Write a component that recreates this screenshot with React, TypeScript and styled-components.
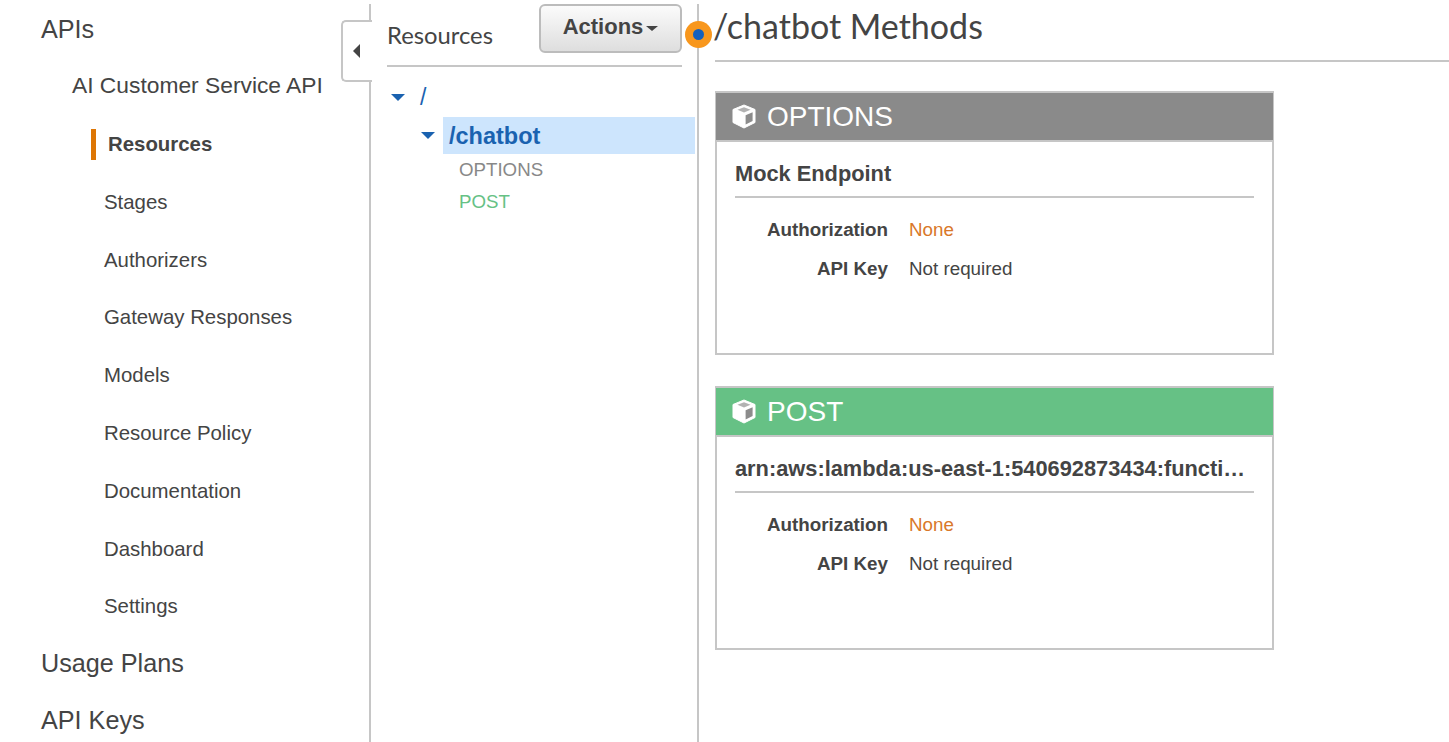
import React from 'react';
import styled, { createGlobalStyle } from 'styled-components';

interface INavItemProps {
  active?: boolean;
}
interface IMethodProps {
  method: 'options' | 'post';
}

const methodColors = {
  options: '#8a8a8a',
  post: '#66c185',
};

const GlobalStyle = createGlobalStyle`
  html, body {
    margin: 0;
    padding: 0;
    height: 742px;
    overflow: hidden;
    background: #fff;
  }
  * {
    box-sizing: border-box;
  }
`;

const Page = styled.div`
  position: relative;
  display: flex;
  height: 742px;
  width: 1449px;
  overflow: hidden;
  font-family: 'Liberation Sans', Arial, sans-serif;
  color: #444;
`;

const SideNav = styled.nav`
  width: 371px;
  flex: none;
  margin-top: 4px;
  border-right: 2px solid #c6c6c6;
  padding-top: 8px;
`;

const TopLink = styled.div`
  height: 35px;
  line-height: 35px;
  padding-left: 41px;
  font-size: 25.2px;
  color: #444;
`;

const ApiName = styled.div`
  height: 35px;
  line-height: 34px;
  margin-top: 21px;
  padding-left: 72px;
  font-size: 22.8px;
  color: #444;
`;

const SubNav = styled.div`
  margin-top: 12.6px;
  padding-left: 91px;
`;

const SubItem = styled.div<INavItemProps>`
  height: 57.8px;
  display: flex;
  align-items: center;
  font-size: 20.4px;
  font-weight: ${props => (props.active ? 700 : 400)};
  color: #444;
  padding-left: ${props => (props.active ? 17 : 13)}px;
  position: relative;
  ${props =>
    props.active
      ? `&::before {
          content: '';
          position: absolute;
          left: 0;
          top: 13px;
          width: 5px;
          height: 31px;
          background: #dd7605;
        }`
      : ''}
`;

const BottomLinks = styled.div`
  margin-top: 10.4px;
  display: flex;
  flex-direction: column;
  gap: 22px;
`;

const CollapseTab = styled.div`
  position: absolute;
  left: 341px;
  top: 20px;
  width: 31px;
  height: 62px;
  background: #fff;
  border: 2px solid #c6c6c6;
  border-right: none;
  border-radius: 5px 0 0 5px;
  display: flex;
  align-items: center;
  padding-left: 10px;
`;

const CollapseArrow = styled.span`
  width: 0;
  height: 0;
  border-top: 7px solid transparent;
  border-bottom: 7px solid transparent;
  border-right: 7px solid #444;
`;

const ResourcePanel = styled.section`
  width: 328px;
  flex: none;
  margin-top: 4px;
  border-right: 2px solid #c6c6c6;
  padding-left: 16px;
`;

const ResourceHeader = styled.div`
  width: 295px;
  height: 63px;
  border-bottom: 2px solid #c6c6c6;
  display: flex;
  justify-content: space-between;
  align-items: flex-start;
`;

const ResourceTitle = styled.h2`
  margin: 16px 0 0;
  font-family: Lato, sans-serif;
  font-weight: 400;
  font-size: 23.8px;
  line-height: 30px;
  color: #444;
`;

const ActionsButton = styled.button`
  width: 143px;
  height: 49px;
  border: 2px solid #bcbcbc;
  border-radius: 6px;
  background: linear-gradient(#fbfbfb, #dedede);
  font-family: 'Liberation Sans', Arial, sans-serif;
  font-weight: 700;
  font-size: 22px;
  color: #444;
  display: flex;
  align-items: center;
  justify-content: center;
  gap: 3px;
  padding: 0 0 3px;
`;

const ActionsCaret = styled.span`
  width: 0;
  height: 0;
  margin-top: 3px;
  border-left: 6px solid transparent;
  border-right: 6px solid transparent;
  border-top: 5px solid #444;
`;

const Tree = styled.div`
  padding-top: 12px;
`;

const RootRow = styled.div`
  height: 37px;
  display: flex;
  align-items: center;
  gap: 15px;
  padding-left: 4px;
  color: #1a62b0;
  font-size: 23px;
`;

const TreeCaret = styled.span`
  width: 0;
  height: 0;
  border-left: 7px solid transparent;
  border-right: 7px solid transparent;
  border-top: 7px solid #1a62b0;
`;

const ChildRow = styled.div`
  height: 37px;
  margin-top: 1px;
  display: flex;
  align-items: center;
  gap: 8px;
  padding-left: 34px;
`;

const SelectedResource = styled.div`
  width: 252px;
  height: 37px;
  line-height: 38px;
  background: #cde5fd;
  color: #1a62b0;
  font-weight: 700;
  font-size: 23.5px;
  padding-left: 6px;
`;

const MethodLink = styled.div<IMethodProps>`
  margin-left: 72px;
  height: 32px;
  line-height: 32px;
  font-size: 18.7px;
  color: ${props => (props.method === 'post' ? methodColors.post : '#888')};
`;

const Main = styled.main`
  flex: 1;
  padding-left: 16px;
  margin-top: -1px;
`;

const MainTitle = styled.h1`
  margin: 0;
  height: 63px;
  border-bottom: 2px solid #c6c6c6;
  font-family: Lato, sans-serif;
  font-weight: 400;
  font-size: 34px;
  line-height: 54px;
  text-indent: -2px;
  color: #444;
`;

const Cards = styled.div`
  padding-top: 29px;
  display: flex;
  flex-direction: column;
  gap: 31px;
`;

const Card = styled.article`
  width: 559px;
  height: 264px;
  border: 2px solid #c6c6c6;
`;

const CardHeader = styled.header<IMethodProps>`
  margin: -2px -1px 0 -1px;
  height: 51px;
  border-top: 2px solid #c6c6c6;
  border-bottom: 2px solid #c6c6c6;
  background: ${props => methodColors[props.method]};
  color: #fff;
  font-size: 28px;
  display: flex;
  align-items: center;
  gap: 11px;
  padding-left: 16px;
`;

const CardBody = styled.div`
  padding: 12px 18px 0 18px;
`;

const Integration = styled.div`
  height: 44px;
  line-height: 40px;
  border-bottom: 2px solid #c6c6c6;
  font-weight: 700;
  font-size: 21.8px;
  color: #444;
  white-space: nowrap;
  overflow: hidden;
  text-overflow: ellipsis;
`;

const InfoList = styled.dl`
  margin: 12px 0 0;
  display: grid;
  grid-template-columns: 153px 1fr;
  column-gap: 21px;
  grid-auto-rows: 39px;
  align-items: center;
  font-size: 18.8px;
`;

const InfoLabel = styled.dt`
  font-weight: 700;
  text-align: right;
  color: #444;
`;

const InfoValue = styled.dd<{ warn?: boolean }>`
  margin: 0;
  color: ${props => (props.warn ? '#d9782a' : '#444')};
`;

const StatusDot = styled.div`
  position: absolute;
  left: 685px;
  top: 21px;
  width: 27px;
  height: 27px;
  border-radius: 50%;
  background: #f8971d;
  display: flex;
  align-items: center;
  justify-content: center;

  &::after {
    content: '';
    width: 11px;
    height: 11px;
    border-radius: 50%;
    background: #1560bd;
  }
`;

const CubeIcon = () => (
  <svg width="24" height="25" viewBox="0 0 24 25">
    <path
      d="M12 1 L23 5.5 V18.5 L12 24 L1 18.5 V5.5 Z"
      fill="#fff"
      stroke="#fff"
      strokeWidth="1"
      strokeLinejoin="round"
    />
    <path d="M12 3.2 L18.6 5.8 L12 8.6 L5.4 5.8 Z" fill="#000" fillOpacity="0.3" />
    <path d="M13.6 11.2 L20.6 8.2 V17 L13.6 20.6 Z" fill="#000" fillOpacity="0.45" />
  </svg>
);

const subItems = [
  'Stages',
  'Authorizers',
  'Gateway Responses',
  'Models',
  'Resource Policy',
  'Documentation',
  'Dashboard',
  'Settings',
];

const methods: { method: 'options' | 'post'; title: string; integration: string }[] = [
  { method: 'options', title: 'OPTIONS', integration: 'Mock Endpoint' },
  {
    method: 'post',
    title: 'POST',
    integration: 'arn:aws:lambda:us-east-1:540692873434:function:ai-customer-service',
  },
];

const App = () => {
  return (
    <Page>
      <GlobalStyle />
      <SideNav>
        <TopLink>APIs</TopLink>
        <ApiName>AI Customer Service API</ApiName>
        <SubNav>
          <SubItem active>Resources</SubItem>
          {subItems.map(item => (
            <SubItem key={item}>{item}</SubItem>
          ))}
        </SubNav>
        <BottomLinks>
          <TopLink>Usage Plans</TopLink>
          <TopLink>API Keys</TopLink>
        </BottomLinks>
      </SideNav>
      <CollapseTab>
        <CollapseArrow />
      </CollapseTab>
      <ResourcePanel>
        <ResourceHeader>
          <ResourceTitle>Resources</ResourceTitle>
          <ActionsButton>
            Actions
            <ActionsCaret />
          </ActionsButton>
        </ResourceHeader>
        <Tree>
          <RootRow>
            <TreeCaret />
            /
          </RootRow>
          <ChildRow>
            <TreeCaret />
            <SelectedResource>/chatbot</SelectedResource>
          </ChildRow>
          <MethodLink method="options">OPTIONS</MethodLink>
          <MethodLink method="post">POST</MethodLink>
        </Tree>
      </ResourcePanel>
      <StatusDot />
      <Main>
        <MainTitle>/chatbot Methods</MainTitle>
        <Cards>
          {methods.map(m => (
            <Card key={m.method}>
              <CardHeader method={m.method}>
                <CubeIcon />
                {m.title}
              </CardHeader>
              <CardBody>
                <Integration>{m.integration}</Integration>
                <InfoList>
                  <InfoLabel>Authorization</InfoLabel>
                  <InfoValue warn>None</InfoValue>
                  <InfoLabel>API Key</InfoLabel>
                  <InfoValue>Not required</InfoValue>
                </InfoList>
              </CardBody>
            </Card>
          ))}
        </Cards>
      </Main>
    </Page>
  );
};

export default App;
